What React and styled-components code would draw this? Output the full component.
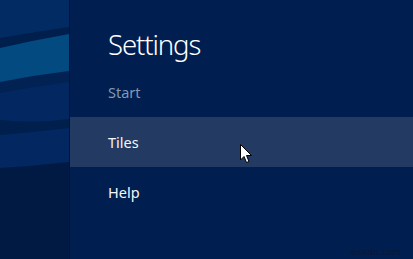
import React from "react";
import styled, { createGlobalStyle } from "styled-components";

const Global = createGlobalStyle`
  html, body { margin: 0; padding: 0; background: #001d4e; }
  body { font-family: "Noto Sans", "Open Sans", "DejaVu Sans", sans-serif; }
`;

const Screen = styled.div`
  position: relative;
  display: flex;
  width: 413px;
  height: 259px;
  overflow: hidden;
  background: #001d4e;
`;

const Backdrop = styled.div`
  flex: 0 0 69px;
  height: 100%;
  border-right: 1px solid #001638;
  svg { display: block; }
`;

const Pane = styled.div`
  flex: 1;
  display: flex;
  flex-direction: column;
  background: #001e4f;
`;

const Title = styled.h1`
  margin: 0;
  height: 67px;
  box-sizing: border-box;
  padding: 29px 0 0 38px;
  font-size: 27.5px;
  line-height: 32px;
  font-weight: 330;
  color: #ffffff;
  letter-spacing: -1.1px;
`;

const Item = styled.div`
  height: 50px;
  display: flex;
  align-items: center;
  padding-left: 38px;
  font-size: 14.5px;
  font-weight: 380;
  color: ${(p) => (p.$muted ? "#8496b5" : "#f4f6fa")};
  background: ${(p) => (p.$active ? "#233a62" : "transparent")};
`;

const Watermark = styled.span`
  position: absolute;
  right: 12px;
  bottom: 2px;
  font-size: 9px;
  font-family: "DejaVu Sans", sans-serif;
  color: #0a1838;
`;

const Cursor = styled.svg`
  position: absolute;
  left: 240px;
  top: 144px;
`;

export default function App() {
  return (
    <>
      <Global />
      <Screen>
        <Backdrop>
          <svg width="69" height="259" viewBox="0 0 69 259">
            <rect width="69" height="259" fill="#011a44" />
            <rect width="69" height="170" fill="#022761" />
            <path d="M0 0 H69 V30 Q35 34 0 40 Z" fill="#022b63" />
            <path d="M0 38 Q35 32 69 27 V37 Q35 41 0 49 Z" fill="#011f4c" />
            <path d="M0 48 Q35 40 69 34 V72 Q35 76 0 83 Z" fill="#034a80" />
            <path d="M0 82 Q35 75 69 71 V82 Q35 86 0 93 Z" fill="#012252" />
            <path d="M0 120 Q35 124 69 119 V128 Q35 132 0 135 Z" fill="#011f4d" />
            <path d="M0 168 Q35 166 69 162 V259 H0 Z" fill="#011a44" />
          </svg>
        </Backdrop>
        <Pane>
          <Title>Settings</Title>
          <Item $muted>Start</Item>
          <Item $active>Tiles</Item>
          <Item>Help</Item>
        </Pane>
        <Cursor width="13" height="20" viewBox="0 0 13 20">
          <path
            d="M0.5 0.5 L0.5 16 L4 12.5 L6.5 18.5 L9 17.5 L6.5 11.5 L11.5 11.5 Z"
            fill="#ffffff"
            stroke="#000000"
            strokeWidth="1"
            strokeLinejoin="miter"
          />
        </Cursor>
        <Watermark>wsxdn.com</Watermark>
      </Screen>
    </>
  );
}
